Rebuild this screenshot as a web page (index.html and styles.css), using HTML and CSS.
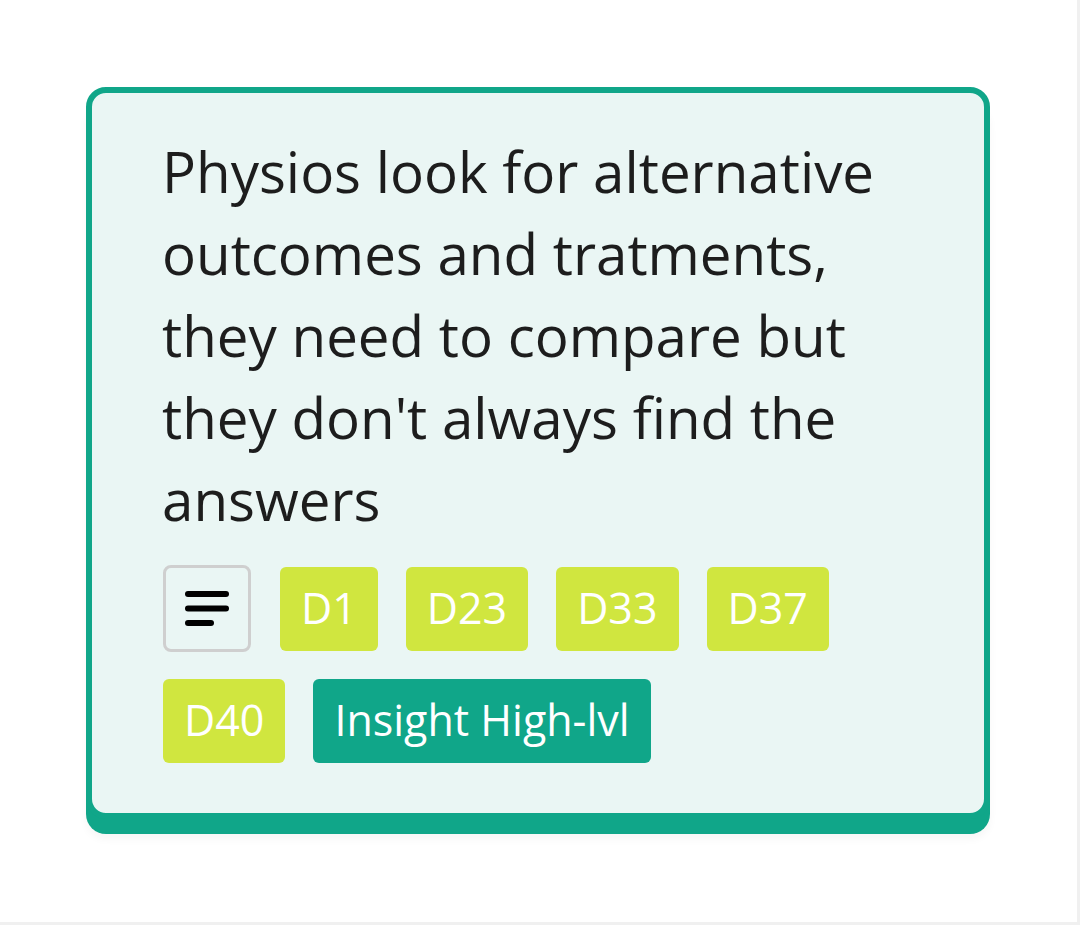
FILE: index.html
```html
<!DOCTYPE html>
<html lang="en">
<head>
<meta charset="utf-8">
<title>Insight card</title>
<link rel="stylesheet" href="styles.css">
</head>
<body>
<div class="frame">
  <div class="card">
    <p class="card-text">Physios look for alternative outcomes and tratments, they need to compare but they don't always find the answers</p>
    <div class="tags">
      <button class="icon-btn" type="button" aria-label="Details">
        <svg width="44" height="36" viewBox="0 0 44 36" aria-hidden="true">
          <g stroke="#000" stroke-width="6" stroke-linecap="round" fill="none">
            <line x1="3" y1="3" x2="41" y2="3"/>
            <line x1="3" y1="17.5" x2="41" y2="17.5"/>
            <line x1="3" y1="32" x2="26" y2="32"/>
          </g>
        </svg>
      </button>
      <span class="tag tag-lime">D1</span>
      <span class="tag tag-lime">D23</span>
      <span class="tag tag-lime">D33</span>
      <span class="tag tag-lime">D37</span>
      <span class="tag tag-lime">D40</span>
      <span class="tag tag-teal">Insight High-lvl</span>
    </div>
  </div>
</div>
</body>
</html>
```
FILE: styles.css
```css
html {
  background: #f0f0f0;
}
body {
  margin: 0;
  font-family: "Open Sans", "Noto Sans", sans-serif;
}
.frame {
  width: 1077px;
  height: 922px;
  background: #ffffff;
  box-sizing: border-box;
  padding: 87px 0 0 86px;
}
.card {
  width: 904px;
  box-sizing: border-box;
  background: #eaf6f4;
  border: 6px solid #10a689;
  border-radius: 20px;
  box-shadow: 0 15px 0 0 #10a689, 0 20px 8px rgba(0, 0, 0, 0.04);
  padding: 38px 68px 50px 71px;
}
.card-text {
  margin: 0 0 0 -1px;
  font-size: 56.5px;
  line-height: 82px;
  color: #1d1d1d;
}
.tags {
  margin-top: 24px;
  display: flex;
  flex-wrap: wrap;
  align-items: center;
  column-gap: 28px;
  row-gap: 27px;
}
.icon-btn {
  width: 88px;
  height: 87px;
  box-sizing: border-box;
  border: 3px solid #cfcfcf;
  border-radius: 8px;
  background: #eaf6f4;
  display: flex;
  align-items: center;
  justify-content: center;
  padding: 0;
  margin-right: 1px;
}
.tag {
  height: 84px;
  display: inline-flex;
  align-items: center;
  padding: 0 21px 3px;
  box-sizing: border-box;
  border-radius: 6px;
  color: #ffffff;
  font-size: 43px;
}
.tag-lime {
  background: #d0e63f;
}
.tag-teal {
  background: #10a689;
}
```
